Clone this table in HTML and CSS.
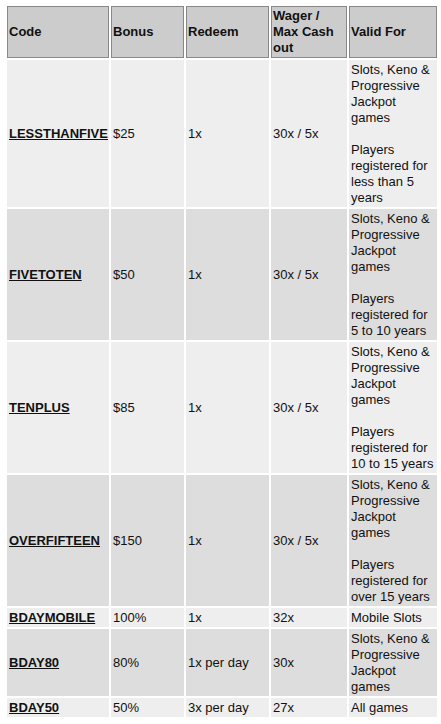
FILE: index.html
```html
<!DOCTYPE html>
<html>
<head>
<meta charset="utf-8">
<link rel="stylesheet" href="styles.css">
</head>
<body>
<table class="bonus-table">
  <thead>
    <tr>
      <th class="c-code">Code</th>
      <th class="c-bonus">Bonus</th>
      <th class="c-redeem">Redeem</th>
      <th class="c-wager">Wager / Max Cash out</th>
      <th class="c-valid">Valid For</th>
    </tr>
  </thead>
  <tbody>
    <tr class="odd">
      <td><a href="#" class="code">LESSTHANFIVE</a></td>
      <td>$25</td>
      <td>1x</td>
      <td>30x / 5x</td>
      <td>Slots, Keno &amp; Progressive Jackpot games<br><br>Players registered for less than 5 years</td>
    </tr>
    <tr class="even">
      <td><a href="#" class="code">FIVETOTEN</a></td>
      <td>$50</td>
      <td>1x</td>
      <td>30x / 5x</td>
      <td>Slots, Keno &amp; Progressive Jackpot games<br><br>Players registered for 5 to 10 years</td>
    </tr>
    <tr class="odd">
      <td><a href="#" class="code">TENPLUS</a></td>
      <td>$85</td>
      <td>1x</td>
      <td>30x / 5x</td>
      <td>Slots, Keno &amp; Progressive Jackpot games<br><br>Players registered for 10 to 15 years</td>
    </tr>
    <tr class="even">
      <td><a href="#" class="code">OVERFIFTEEN</a></td>
      <td>$150</td>
      <td>1x</td>
      <td>30x / 5x</td>
      <td>Slots, Keno &amp; Progressive Jackpot games<br><br>Players registered for over 15 years</td>
    </tr>
    <tr class="odd">
      <td><a href="#" class="code">BDAYMOBILE</a></td>
      <td>100%</td>
      <td>1x</td>
      <td>32x</td>
      <td>Mobile Slots</td>
    </tr>
    <tr class="even">
      <td><a href="#" class="code">BDAY80</a></td>
      <td>80%</td>
      <td>1x per day</td>
      <td>30x</td>
      <td>Slots, Keno &amp; Progressive Jackpot games</td>
    </tr>
    <tr class="odd">
      <td><a href="#" class="code">BDAY50</a></td>
      <td>50%</td>
      <td>3x per day</td>
      <td>27x</td>
      <td>All games</td>
    </tr>
  </tbody>
</table>
</body>
</html>
```

FILE: styles.css
```css
html, body {
  margin: 0;
  padding: 0;
  background: #fff;
}

body {
  font-family: "Liberation Sans", Arial, sans-serif;
  font-size: 13px;
  line-height: 16px;
  color: #111;
}

.bonus-table {
  table-layout: fixed;
  width: 434px;
  border-spacing: 2px;
  border-collapse: separate;
  margin: 4px 0 0 5px;
}

.bonus-table th,
.bonus-table td {
  box-sizing: border-box;
  text-align: left;
  vertical-align: middle;
}

.bonus-table th {
  background: #cccccc;
  border: 1px solid #888888;
  padding: 1px 1px;
  font-weight: bold;
}

.bonus-table td {
  padding: 2px 2px 1px 2px;
}

.c-code { width: 102px; }
.c-bonus { width: 73px; }
.c-redeem { width: 83px; }
.c-wager { width: 76px; }
.c-valid { width: 88px; }

.odd td { background: #eeeeee; }
.even td { background: #dddddd; }

.code {
  color: #111;
  font-weight: bold;
  text-decoration: underline;
}
```
